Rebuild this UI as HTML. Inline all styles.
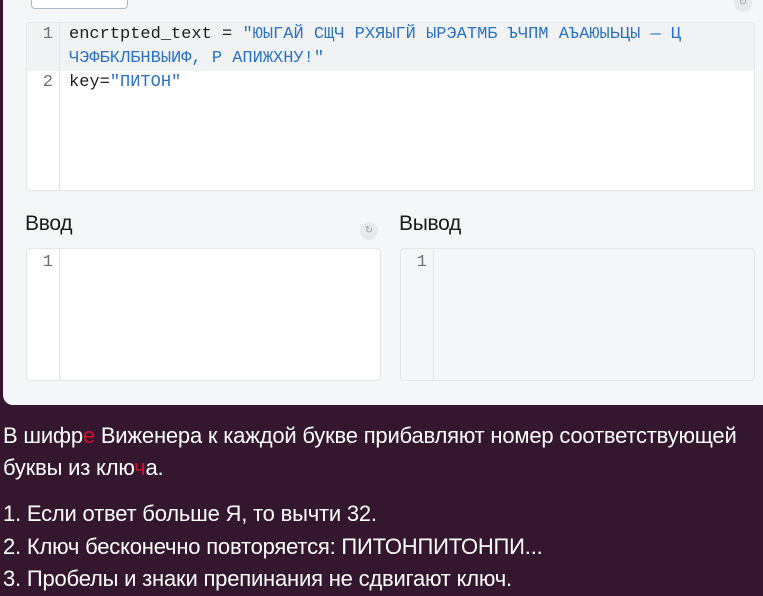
<!DOCTYPE html>
<html><head><meta charset="utf-8"><style>
*{box-sizing:border-box;margin:0;padding:0}
body{width:763px;height:596px;overflow:hidden;background:#34172e;font-family:"Liberation Sans",sans-serif;position:relative}
.panel{position:absolute;left:3px;top:-10px;width:770px;height:415px;background:#f5f6f8;border-radius:0 0 0 10px}
.btn{position:absolute;left:31px;top:-6px;width:97px;height:15px;border:1px solid #aeb9c9;border-radius:4px;background:#fff}
.ref{position:absolute;width:18px;height:18px;border-radius:50%;background:#e8e9ec;color:#9a9ca3;font-size:10px;text-align:center;line-height:18px}
.ed{position:absolute;background:#fff;border:1px solid #e3e5e9;border-radius:4px;overflow:hidden;font-family:"Liberation Mono","DejaVu Sans Mono",monospace;font-size:17px}
.gut{position:absolute;left:0;top:0;bottom:0;width:33px;border-right:1px solid #e3e5e9}
.ln{position:absolute;left:0;width:26px;text-align:right;color:#6b6f78;font-size:17px;line-height:24px}
.code{position:absolute;left:42px;color:#1e1e1e;line-height:24px;white-space:pre}
.s{color:#2a73c8}
.lbl{position:absolute;font-size:21px;color:#1a1a1a;letter-spacing:-0.3px}
.txt{position:absolute;left:3px;color:#fff;font-size:22px;letter-spacing:-0.2px;white-space:nowrap}
.r{color:#d0122f}
</style></head><body>
<div class="panel"></div>
<div class="btn"></div>
<div class="ref" style="left:734px;top:-6px">↻</div>
<div class="ed" style="left:26px;top:22px;width:729px;height:169px">
 <div style="position:absolute;left:0;top:0;width:100%;height:48px;background:#f1f2f4"></div>
 <div class="gut"></div>
 <div class="ln" style="top:0">1</div>
 <div class="ln" style="top:48px">2</div>
 <div class="code" style="top:0">encrtpted_text = <span class="s">"ЮЫГАЙ СЩЧ РХЯЫГЙ ЫРЭАТМБ ЪЧПМ АЪАЮЫЬЦЫ — Ц</span></div>
 <div class="code" style="top:24px"><span class="s">ЧЭФБКЛБНВЫИФ, Р АПИЖХНУ!"</span></div>
 <div class="code" style="top:48px">key=<span class="s">"ПИТОН"</span></div>
</div>
<div class="lbl" style="left:25px;top:212px">Ввод</div>
<div class="ref" style="left:360px;top:222px">↻</div>
<div class="lbl" style="left:399px;top:212px">Вывод</div>
<div class="ed" style="left:26px;top:248px;width:355px;height:133px">
 <div class="gut"></div><div class="ln" style="top:2px">1</div>
</div>
<div class="ed" style="left:400px;top:248px;width:355px;height:133px;background:#f5f6f8">
 <div class="gut"></div><div class="ln" style="top:2px">1</div>
</div>
<div class="txt" style="top:423px">В шифр<span class="r">е</span> Виженера к каждой букве прибавляют номер соответствующей</div>
<div class="txt" style="top:455px">буквы из клю<span class="r">ч</span>а.</div>
<div class="txt" style="top:501px">1. Если ответ больше Я, то вычти 32.</div>
<div class="txt" style="top:534px">2. Ключ бесконечно повторяется: ПИТОНПИТОНПИ...</div>
<div class="txt" style="top:566px">3. Пробелы и знаки препинания не сдвигают ключ.</div>
</body></html>
